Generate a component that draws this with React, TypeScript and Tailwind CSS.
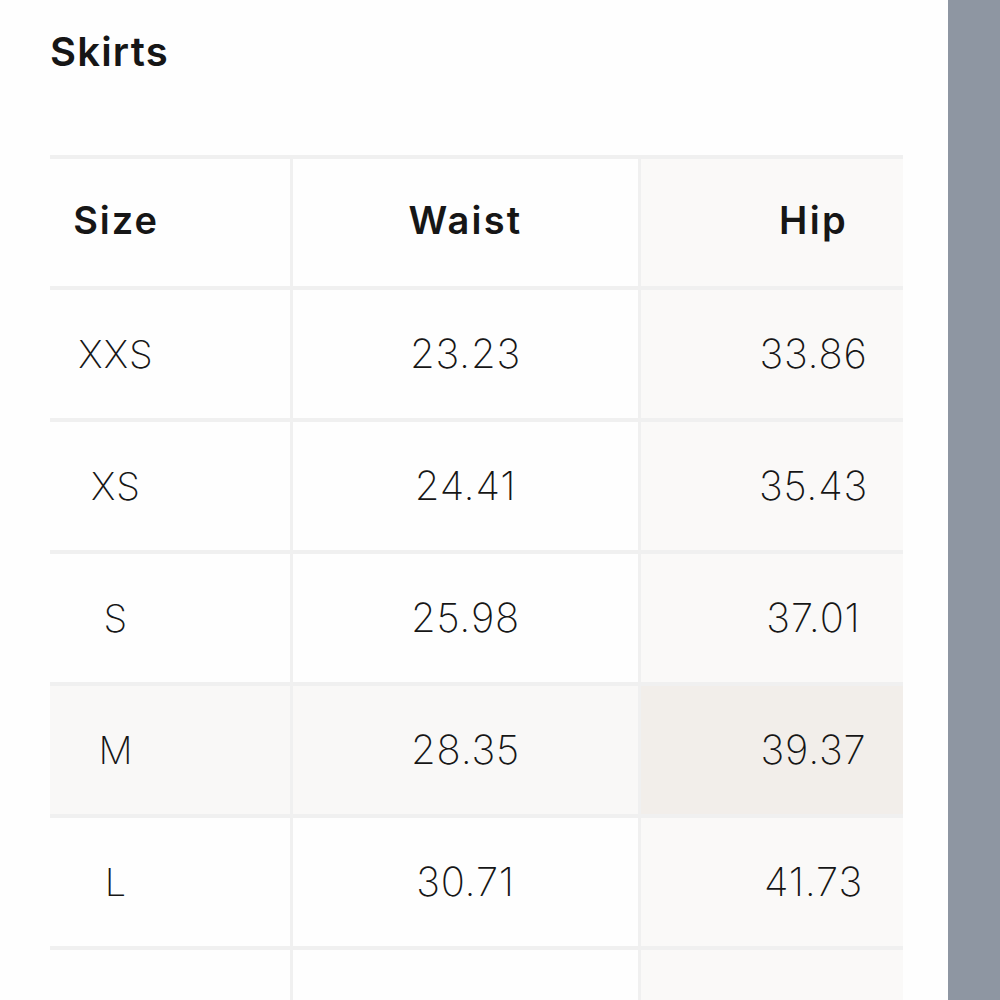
import React from 'react';

const ROWS = [
  { size: 'XXS', waist: '23.23', hip: '33.86' },
  { size: 'XS', waist: '24.41', hip: '35.43' },
  { size: 'S', waist: '25.98', hip: '37.01' },
  { size: 'M', waist: '28.35', hip: '39.37', active: true },
  { size: 'L', waist: '30.71', hip: '41.73' },
  // next row only shows its top edge in the viewport
  { size: '', waist: '', hip: '' },
];

const App: React.FC = () => {
  return (
    <div className="flex h-[1000px] w-[1000px] overflow-hidden bg-[#fefefe] font-['Inter',sans-serif] text-[#161616]">
      <div className="w-[948px] shrink-0 pl-[50px]">
        <h1 className="pt-[28px] text-[40px] leading-[48px] font-semibold tracking-[0.03em]">Skirts</h1>

        <div className="mt-[79px] w-[853px] overflow-hidden">
          <div className="grid w-[936px] grid-cols-[240px_345px_345px] gap-x-[3px] gap-y-[4px] bg-[#f0f0f0] pt-[4px]">
            {/* header */}
            <div className="flex h-[127px] items-center bg-[#fefefe]">
              <span className="w-[132px] pb-[4px] text-center text-[38px] font-semibold tracking-[0.05em]">Size</span>
            </div>
            <div className="flex h-[127px] items-center justify-center bg-[#fefefe] pb-[4px] text-[38px] font-semibold tracking-[0.06em]">
              Waist
            </div>
            <div className="flex h-[127px] items-center justify-center bg-[#faf9f8] pb-[4px] text-[38px] font-semibold tracking-[0.06em]">
              Hip
            </div>

            {ROWS.map((row, i) => (
              <React.Fragment key={i}>
                <div className={`flex h-[128px] items-center ${row.active ? 'bg-[#f9f8f7]' : 'bg-[#fefefe]'}`}>
                  <span className="w-[132px] text-center text-[38px] font-[250] tracking-[0.03em]">{row.size}</span>
                </div>
                <div
                  className={`flex h-[128px] items-center justify-center text-[40px] font-[250] tracking-[0.02em] ${
                    row.active ? 'bg-[#f9f8f7]' : 'bg-[#fefefe]'
                  }`}
                >
                  {row.waist}
                </div>
                <div
                  className={`flex h-[128px] items-center justify-center text-[40px] font-[250] tracking-[0.02em] ${
                    row.active ? 'bg-[#f2eeea]' : 'bg-[#faf9f8]'
                  }`}
                >
                  {row.hip}
                </div>
              </React.Fragment>
            ))}
          </div>
        </div>
      </div>
      <div className="flex-1 bg-[#8e96a2]" />
    </div>
  );
};

export default App;
